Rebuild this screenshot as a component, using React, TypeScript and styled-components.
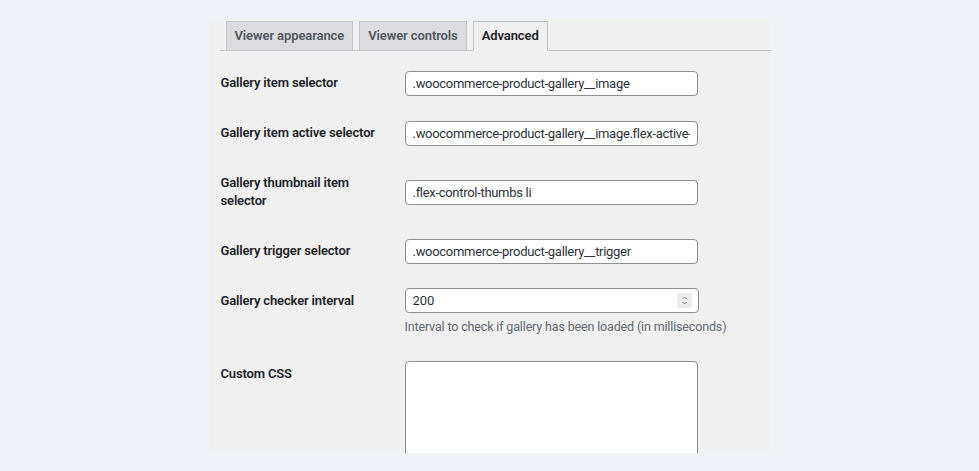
import { createGlobalStyle, styled } from "styled-components";

const GlobalStyle = createGlobalStyle`
  body {
    margin: 0;
    background: #eff2f7;
    font-family: Roboto, "Noto Sans", sans-serif;
    color: #1d2327;
  }
`;

const Panel = styled.div`
  width: 562px;
  height: 435px;
  margin: 18px auto 0;
  padding: 3px 0 0 11px;
  box-sizing: border-box;
  background: #f0f0f1;
  overflow: hidden;
`;

const TabBar = styled.nav`
  display: flex;
  gap: 6px;
  padding-left: 6px;
  border-bottom: 1px solid #c3c4c7;
`;

const Tab = styled.a<{ $active?: boolean }>`
  height: 30px;
  box-sizing: border-box;
  margin-bottom: -1px;
  padding: 0 8px;
  border: 1px solid #c3c4c7;
  border-bottom-color: ${(p) => (p.$active ? "#f0f0f1" : "#c3c4c7")};
  background: ${(p) => (p.$active ? "#f0f0f1" : "#dcdcde")};
  color: ${(p) => (p.$active ? "#1d2327" : "#50575e")};
  font-size: 13px;
  font-weight: 600;
  line-height: 28px;
  letter-spacing: -0.1px;
  text-decoration: none;
  cursor: pointer;
`;

const Form = styled.div`
  margin-top: 7px;
`;

const Row = styled.div`
  display: flex;
  gap: 24px;
`;

const Label = styled.label`
  flex: none;
  align-self: flex-start;
  width: 160px;
  padding: 16px 0 16px 1px;
  font-size: 13px;
  font-weight: 600;
  line-height: 18px;
  letter-spacing: -0.15px;
`;

const Field = styled.div`
  align-self: center;
  padding: 12px 0;
`;

const Input = styled.input`
  display: block;
  width: 293px;
  height: 25px;
  box-sizing: border-box;
  padding: 0 7px;
  border: 1px solid #8c8f94;
  border-radius: 4px;
  background: #fff;
  color: #2c3338;
  font-family: inherit;
  font-size: 13px;
  letter-spacing: -0.3px;
  outline: none;
`;

const NumberBox = styled.div`
  display: flex;
  align-items: center;
  width: 294px;
  height: 25px;
  box-sizing: border-box;
  padding: 0 6px 0 7px;
  border: 1px solid #8c8f94;
  border-radius: 4px;
  background: #fff;
  font-size: 13px;
  color: #2c3338;
`;

const NumberValue = styled.span`
  flex: 1;
`;

const Spinner = styled.span`
  display: flex;
  width: 15px;
  height: 15px;
  border-radius: 2px;
  background: #ececec;
`;

const Help = styled.p`
  margin: 6px 0 2px;
  font-size: 12.5px;
  line-height: 16px;
  letter-spacing: -0.15px;
  color: #646970;
`;

const TextArea = styled.textarea`
  display: block;
  width: 293px;
  height: 160px;
  box-sizing: border-box;
  border: 1px solid #8c8f94;
  border-radius: 4px;
  background: #fff;
  resize: none;
  outline: none;
`;

const fields = [
  { label: "Gallery item selector", value: ".woocommerce-product-gallery__image" },
  { label: "Gallery item active selector", value: ".woocommerce-product-gallery__image.flex-active-slide" },
  { label: "Gallery thumbnail item selector", value: ".flex-control-thumbs li" },
  { label: "Gallery trigger selector", value: ".woocommerce-product-gallery__trigger" },
];

export default function App() {
  return (
    <>
      <GlobalStyle />
      <Panel>
        <TabBar>
          <Tab>Viewer appearance</Tab>
          <Tab>Viewer controls</Tab>
          <Tab $active>Advanced</Tab>
        </TabBar>
        <Form>
          {fields.map((f) => (
            <Row key={f.label}>
              <Label>{f.label}</Label>
              <Field>
                <Input defaultValue={f.value} readOnly />
              </Field>
            </Row>
          ))}
          <Row>
            <Label>Gallery checker interval</Label>
            <Field>
              <NumberBox>
                <NumberValue>200</NumberValue>
                <Spinner>
                  <svg width="15" height="15" viewBox="0 0 15 15" fill="none" stroke="#8d8d8d" strokeWidth="1">
                    <path d="M5.5 6 L7.5 4 L9.5 6" />
                    <path d="M5.5 9 L7.5 11 L9.5 9" />
                  </svg>
                </Spinner>
              </NumberBox>
              <Help>Interval to check if gallery has been loaded (in milliseconds)</Help>
            </Field>
          </Row>
          <Row>
            <Label>Custom CSS</Label>
            <Field>
              <TextArea />
            </Field>
          </Row>
        </Form>
      </Panel>
    </>
  );
}
